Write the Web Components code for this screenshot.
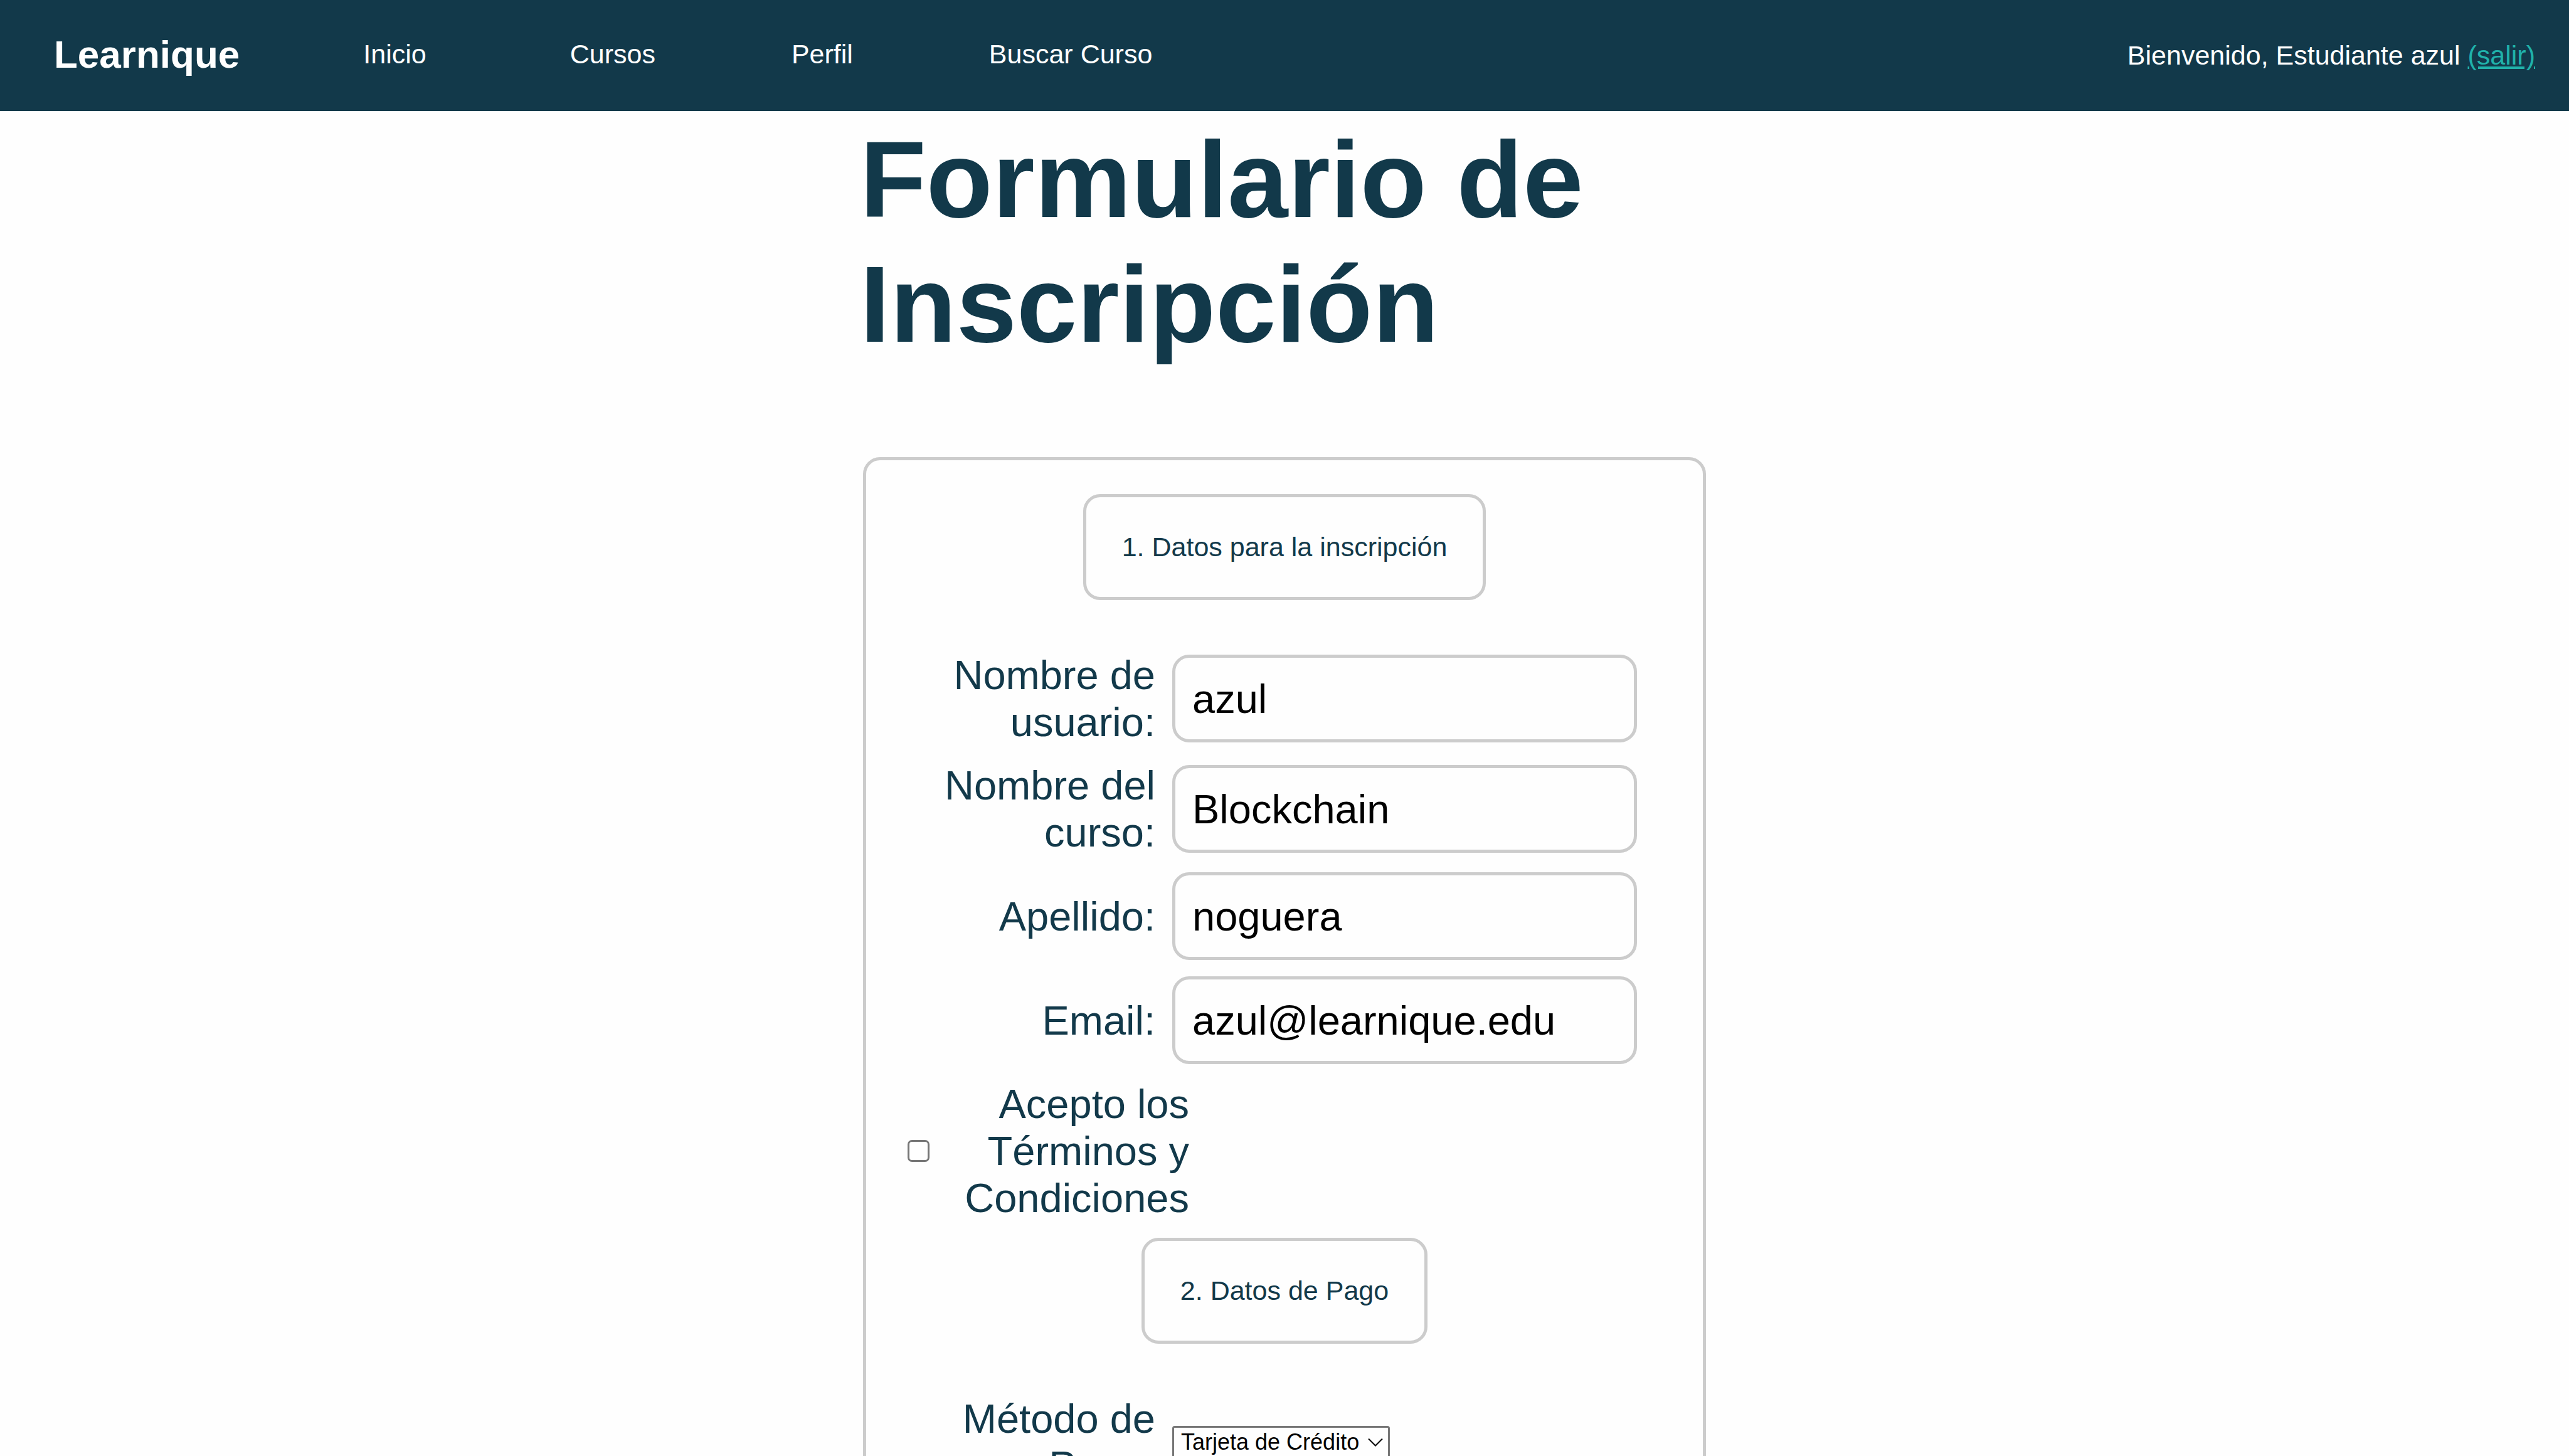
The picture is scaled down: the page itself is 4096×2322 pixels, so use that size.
<!DOCTYPE html>
<html lang="es">
<head>
<meta charset="utf-8">
<title>Learnique</title>
<style>
  :root {
    --ink: #12394a;
    --line: #cccccc;
    --paper: #fefefe;
    --text-md: 43px;
    --leading-md: 51px;
    --text-lg: 65px;
    --leading-lg: 75px;
    --pad: 54px;
    --gap: 27px;
    --label-width: 406px;
    --control-width: 741px;
  }
  html, body { margin: 0; height: 100%; }
  body {
    background: var(--paper);
    color: var(--ink);
    font: 43px/51px "Liberation Sans", Arial, sans-serif;
  }
</style>
</head>
<body>
<learn-app>
  <learn-header slot="header" user="azul">
    <learn-link href="#inicio">Inicio</learn-link>
    <learn-link href="#cursos">Cursos</learn-link>
    <learn-link href="#perfil">Perfil</learn-link>
    <learn-link href="#buscar">Buscar Curso</learn-link>
  </learn-header>
  <learn-title>Formulario de Inscripción</learn-title>
  <learn-form>
    <learn-step>1. Datos para la inscripción</learn-step>
    <learn-field label="Nombre de usuario:" value="azul"></learn-field>
    <learn-field label="Nombre del curso:" value="Blockchain"></learn-field>
    <learn-field label="Apellido:" value="noguera"></learn-field>
    <learn-field label="Email:" type="email" value="azul@learnique.edu"></learn-field>
    <learn-check>Acepto los Términos y Condiciones</learn-check>
    <learn-step>2. Datos de Pago</learn-step>
    <learn-select label="Método de Pago:" options="Tarjeta de Crédito"></learn-select>
  </learn-form>
</learn-app>

<script>
  class Base extends HTMLElement {
    constructor() {
      super();
      this.attachShadow({ mode: "open" });
    }
    connectedCallback() {
      this.shadowRoot.innerHTML =
        "<style>*{box-sizing:border-box}" + this.css() + "</style>" + this.html();
    }
    css() { return ""; }
    html() { return "<slot></slot>"; }
  }

  customElements.define("learn-app", class extends Base {
    css() { return `
      :host { display: flex; flex-direction: column; height: 100vh; }
      main { flex: 1; min-height: 0; overflow-y: auto; scrollbar-width: none; padding: 10px 0 54px; }
      .column { width: 1354px; max-width: 100%; margin: 0 auto; }`; }
    html() { return `<slot name="header"></slot><main><div class="column"><slot></slot></div></main>`; }
  });

  customElements.define("learn-header", class extends Base {
    css() { return `
      :host { display: block; background: var(--ink); color: #fff; }
      header { display: flex; align-items: center; justify-content: space-between; padding: 49px var(--pad) 49px 86px; }
      .left { display: flex; align-items: center; gap: 197px; padding-bottom: 4px; }
      .brand { font-size: 62px; line-height: var(--leading-lg); font-weight: bold; }
      nav { display: flex; gap: 217px; }
      ::slotted(:first-child) { padding-right: 12px; }
      p { margin: 0; }
      a { color: #20b2aa; }`; }
    html() { return `
      <header>
        <div class="left"><span class="brand">Learnique</span><nav><slot></slot></nav></div>
        <p>Bienvenido, Estudiante ${this.getAttribute("user")} <a href="#salir">(salir)</a></p>
      </header>`; }
  });

  customElements.define("learn-link", class extends Base {
    css() { return `:host { display: block; } a { color: inherit; text-decoration: none; }`; }
    html() { return `<a href="${this.getAttribute("href")}"><slot></slot></a>`; }
  });

  customElements.define("learn-title", class extends Base {
    css() { return `
      :host { display: block; }
      h1 { margin: 0 0 144px; font-size: 173px; line-height: 199px; }`; }
    html() { return `<h1><slot></slot></h1>`; }
  });

  customElements.define("learn-form", class extends Base {
    css() { return `
      :host { display: block; margin: 0 5px; }
      form { display: flex; flex-direction: column; gap: 26px; padding: var(--pad) 55px; border: 5px solid var(--line); border-radius: 27px; }`; }
    html() { return `<form><slot></slot></form>`; }
  });

  customElements.define("learn-step", class extends Base {
    css() { return `
      :host { display: block; align-self: center; margin-bottom: 56px; }
      h2 { margin: 0; padding: var(--pad) 57px; border: 5px solid var(--line); border-radius: 27px; font-size: var(--text-md); line-height: var(--leading-md); font-weight: normal; }`; }
    html() { return `<h2><slot></slot></h2>`; }
  });

  const row = `
    :host { display: flex; align-items: center; gap: var(--gap); font-size: var(--text-lg); line-height: var(--leading-lg); }
    label { flex: none; width: var(--label-width); text-align: right; }`;

  customElements.define("learn-field", class extends Base {
    css() { return row + `
      input { width: var(--control-width); height: 140px; margin: 0; padding: var(--gap); border: 5px solid var(--line); border-radius: 27px; background: var(--paper); color: #000; font: inherit; }`; }
    html() { return `
      <label for="control">${this.getAttribute("label")}</label>
      <input id="control" type="${this.getAttribute("type") || "text"}" value="${this.getAttribute("value")}">`; }
  });

  customElements.define("learn-check", class extends Base {
    css() { return row + `
      :host { gap: 8px; }
      input { appearance: none; flex: none; width: 35px; height: 35px; margin: 0 0 0 11px; border: 3px solid #767676; border-radius: 7px; background: #fff; }`; }
    html() { return `<input id="control" type="checkbox"><label for="control"><slot></slot></label>`; }
  });

  customElements.define("learn-select", class extends Base {
    css() { return row + `
      .box { display: grid; align-items: center; }
      select, svg { grid-area: 1 / 1; }
      select { appearance: none; height: 53px; margin: 0; padding: 0 45px 0 11px; border: 3px solid #767676; border-radius: 4px; background: var(--paper); color: #000; font-family: inherit; font-size: 36px; line-height: 42px; }
      svg { justify-self: end; width: 24px; height: 14px; margin-right: 11px; pointer-events: none; }`; }
    html() {
      const options = this.getAttribute("options").split("|").map(o => `<option>${o}</option>`).join("");
      return `
      <label for="control">${this.getAttribute("label")}</label>
      <div class="box">
        <select id="control">${options}</select>
        <svg viewBox="0 0 24 14" fill="none" stroke="#000" stroke-width="2"><path d="M1 1.500 12 12.500 23 1.500"/></svg>
      </div>`;
    }
  });
</script>
</body>
</html>
